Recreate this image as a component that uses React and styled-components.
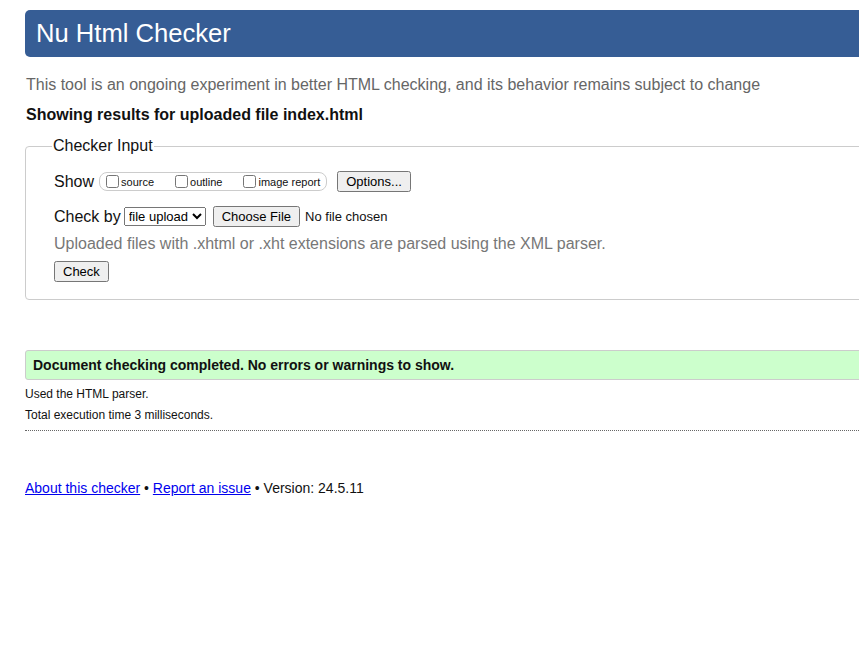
import React from "react";
import styled, { createGlobalStyle } from "styled-components";

const GlobalStyle = createGlobalStyle`
  html, body {
    margin: 0;
    padding: 0;
    overflow: hidden;
    background: #fff;
  }
  body {
    font-family: "Liberation Sans", Arial, sans-serif;
    color: #111;
  }
`;

const Page = styled.div`
  width: 1000px;
  padding: 10px 0 40px 25px;
`;

const Header = styled.header`
  height: 47px;
  background: #365d95;
  border-radius: 5px;
  display: flex;
  align-items: center;
  padding-left: 11px;
`;

const Title = styled.h1`
  margin: 0;
  font-size: 25.6px;
  font-weight: normal;
  color: #fff;
`;

const Intro = styled.p`
  margin: 19px 0 0 1px;
  font-size: 16px;
  color: #666;
`;

const Showing = styled.p`
  margin: 12px 0 0 1px;
  font-size: 16px;
  font-weight: bold;
`;

const Fieldset = styled.fieldset`
  margin: 13px 0 0;
  padding: 16px 28px 17px;
  border: 1px solid #ccc;
  border-radius: 4px;
`;

const Legend = styled.legend`
  font-size: 16px;
  padding: 0 1px;
  margin-left: -2px;
`;

const Row = styled.div`
  display: flex;
  align-items: center;
  font-size: 16px;
  margin-top: ${(p) => p.$top || 0}px;
`;

const ChoiceGroup = styled.span`
  display: inline-flex;
  align-items: center;
  gap: 17px;
  margin-left: 5px;
  padding: 0 6px 0 2px;
  height: 17px;
  border: 1px solid #ccc;
  border-radius: 8px;
`;

const Choice = styled.label`
  display: inline-flex;
  align-items: center;
  font-size: 11px;

  input {
    margin: 0 2px 0 4px;
    width: 13px;
    height: 13px;
  }
`;

const Button = styled.button`
  font-family: "Liberation Sans", Arial, sans-serif;
  font-size: 13px;
  margin-left: ${(p) => p.$left || 0}px;
  padding: 1px 7px;
`;

const Select = styled.select`
  font-family: "Liberation Sans", Arial, sans-serif;
  font-size: 13px;
  margin-left: 3px;
`;

const NoFile = styled.span`
  font-size: 13px;
  margin-left: 5px;
`;

const Hint = styled.p`
  margin: 8px 0 0;
  font-size: 16px;
  color: #777;
`;

const Success = styled.div`
  margin-top: 50px;
  height: 28px;
  display: flex;
  align-items: center;
  padding-left: 7px;
  background: #ccffcc;
  border: 1px solid #ccc;
  border-radius: 3px;
  font-size: 14px;
  font-weight: bold;
`;

const Detail = styled.p`
  margin: ${(p) => p.$top}px 0 0;
  font-size: 12px;
`;

const Rule = styled.hr`
  margin: 8px 0 0;
  border: 0;
  border-top: 1px dotted #666;
`;

const Footer = styled.p`
  margin: 49px 0 0;
  font-size: 14px;

  a {
    color: #0000ee;
  }
`;

export default function App() {
  return (
    <>
      <GlobalStyle />
      <Page>
        <Header>
          <Title>Nu Html Checker</Title>
        </Header>
        <Intro>
          This tool is an ongoing experiment in better HTML checking, and its behavior remains subject to change
        </Intro>
        <Showing>Showing results for uploaded file index.html</Showing>

        <Fieldset>
          <Legend>Checker Input</Legend>
          <Row>
            Show
            <ChoiceGroup>
              <Choice>
                <input type="checkbox" />
                source
              </Choice>
              <Choice>
                <input type="checkbox" />
                outline
              </Choice>
              <Choice>
                <input type="checkbox" />
                image report
              </Choice>
            </ChoiceGroup>
            <Button $left={10}>Options...</Button>
          </Row>
          <Row $top={14}>
            Check by
            <Select defaultValue="upload">
              <option value="upload">file upload</option>
            </Select>
            <Button $left={7}>Choose File</Button>
            <NoFile>No file chosen</NoFile>
          </Row>
          <Hint>Uploaded files with .xhtml or .xht extensions are parsed using the XML parser.</Hint>
          <Row $top={8}>
            <Button>Check</Button>
          </Row>
        </Fieldset>

        <Success>Document checking completed. No errors or warnings to show.</Success>
        <Detail $top={7}>Used the HTML parser.</Detail>
        <Detail $top={7}>Total execution time 3 milliseconds.</Detail>
        <Rule />

        <Footer>
          <a href="#about">About this checker</a> • <a href="#issue">Report an issue</a> • Version: 24.5.11
        </Footer>
      </Page>
    </>
  );
}
